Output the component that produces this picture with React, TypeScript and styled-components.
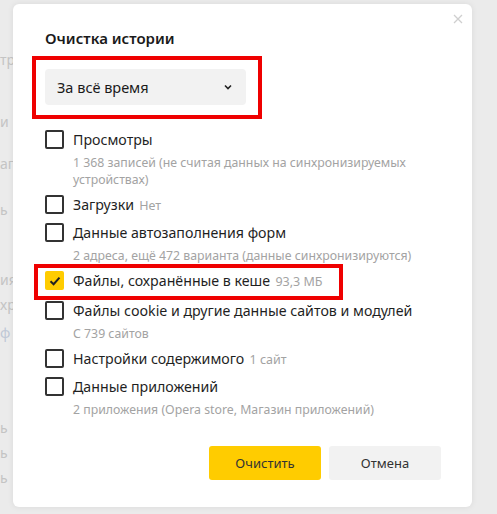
import React from 'react';
import styled, { createGlobalStyle } from 'styled-components';

const GlobalStyle = createGlobalStyle`
html, body {
  margin: 0;
  padding: 0;
  background: #ebebeb;
  font-family: 'Noto Sans', 'Open Sans', sans-serif;
}
`;

const Page = styled.div`
position: relative;
width: 497px;
height: 514px;
overflow: hidden;
background: #ebebeb;
`;

const BackdropText = styled.div`
display: flex;
flex-direction: column;
padding-top: 50px;
font-size: 14px;
`;

const BackdropLine = styled.div<{ $h: number; $blue?: boolean }>`
height: ${p => p.$h}px;
line-height: 20px;
white-space: nowrap;
color: ${p => (p.$blue ? '#bfc8d6' : '#c4c4c4')};
`;

const Modal = styled.div`
position: absolute;
top: 4px;
left: 13px;
width: 459px;
height: 503px;
box-sizing: border-box;
background: #fff;
border-radius: 6px;
box-shadow: 0 0 6px rgba(0, 0, 0, 0.08);
padding: 24px 31px 27px 32px;
display: flex;
flex-direction: column;
`;

const Close = styled.button`
position: absolute;
top: 9px;
right: 8px;
width: 12px;
height: 12px;
border: none;
background: none;
padding: 0;
cursor: pointer;
`;

const Title = styled.h2`
margin: 0;
font-size: 15px;
line-height: 21px;
font-weight: 600;
color: #1a1a1a;
`;

const SelectWrap = styled.div`
position: relative;
margin-top: 20px;
margin-bottom: 25px;
`;

const Highlight = styled.div<{ $top: number; $left: number; $w: number; $h: number }>`
position: absolute;
top: ${p => p.$top}px;
left: ${p => p.$left}px;
width: ${p => p.$w}px;
height: ${p => p.$h}px;
box-sizing: border-box;
border: 4px solid #ef0000;
pointer-events: none;
`;

const Select = styled.div`
width: 201px;
height: 36px;
box-sizing: border-box;
background: #f2f2f2;
border-radius: 4px;
padding: 0 14px 0 12px;
display: flex;
align-items: center;
justify-content: space-between;
font-size: 14.5px;
color: #1a1a1a;
`;

const List = styled.div`
display: flex;
flex-direction: column;
`;

const Item = styled.div<{ $extra?: number }>`
position: relative;
display: grid;
grid-template-columns: 19px 1fr;
column-gap: 9px;
padding-bottom: ${p => 9 + (p.$extra || 0)}px;
`;

const Box = styled.span<{ $checked?: boolean }>`
width: 19px;
height: 19px;
box-sizing: border-box;
border-radius: 2px;
border: ${p => (p.$checked ? 'none' : '2px solid #333')};
background: ${p => (p.$checked ? '#ffcc00' : '#fff')};
display: flex;
align-items: center;
justify-content: center;
`;

const Label = styled.div`
font-size: 14.2px;
line-height: 19px;
height: 19px;
color: #1f1f1f;
white-space: nowrap;
`;

const Note = styled.span`
font-size: 12.5px;
line-height: 1;
color: #a3a3a3;
margin-left: 2px;
`;

const Sub = styled.div`
grid-column: 2;
margin-top: 5px;
margin-bottom: -2px;
font-size: 12.3px;
line-height: 17px;
color: #a3a3a3;
`;

const Footer = styled.div`
margin-top: auto;
display: flex;
justify-content: flex-end;
gap: 8px;
`;

const Button = styled.button<{ $primary?: boolean }>`
width: 112px;
height: 34px;
border: none;
border-radius: 3px;
background: ${p => (p.$primary ? '#ffcc00' : '#f2f2f2')};
color: #333;
font-family: inherit;
font-size: 13px;
cursor: pointer;
`;

type Option = {
  label: string;
  note?: string;
  sub?: string;
  checked?: boolean;
  marked?: boolean;
};

const options: Option[] = [
  { label: 'Просмотры', sub: '1 368 записей (не считая данных на синхронизируемых устройствах)' },
  { label: 'Загрузки', note: 'Нет' },
  { label: 'Данные автозаполнения форм', sub: '2 адреса, ещё 472 варианта (данные синхронизируются)' },
  { label: 'Файлы, сохранённые в кеше', note: '93,3 МБ', checked: true, marked: true },
  { label: 'Файлы cookie и другие данные сайтов и модулей', sub: 'С 739 сайтов' },
  { label: 'Настройки содержимого', note: '1 сайт' },
  { label: 'Данные приложений', sub: '2 приложения (Opera store, Магазин приложений)' },
];

const backdrop: [string, number, boolean?][] = [
  ['тр', 62],
  ['и', 42],
  ['аг', 46],
  ['ь', 70],
  ['ия', 25],
  ['хр', 28],
  ['ф', 95, true],
  ['ь', 25],
  ['ь', 25],
  ['ь', 25],
];

function Check() {
  return (
    <svg width="12" height="10" viewBox="0 0 12 10">
      <path d="M1.5 5.2 L4.6 8.2 L10.5 1.6" fill="none" stroke="#222" strokeWidth="2" />
    </svg>
  );
}

export default function App() {
  return (
    <Page>
      <GlobalStyle />
      <BackdropText>
        {backdrop.map(([t, h, blue], i) => (
          <BackdropLine key={'bg' + i} $h={h} $blue={blue}>{t}</BackdropLine>
        ))}
      </BackdropText>
      <Modal>
        <Close aria-label="Закрыть">
          <svg width="12" height="12" viewBox="0 0 12 12">
            <path d="M2 2 L10 10 M10 2 L2 10" stroke="#cfcfcf" strokeWidth="1.3" />
          </svg>
        </Close>
        <Title>Очистка истории</Title>
        <SelectWrap>
          <Select>
            <span>За всё время</span>
            <svg width="8" height="6" viewBox="0 0 8 6">
              <path d="M1 1.5 L4 4.5 L7 1.5" fill="none" stroke="#222" strokeWidth="1.6" />
            </svg>
          </Select>
          <Highlight $top={-13} $left={-13} $w={230} $h={63} />
        </SelectWrap>
        <List>
          {options.map((o, i) => (
            <Item key={'opt' + i} $extra={o.marked ? 2 : 0}>
              <Box $checked={o.checked}>{o.checked ? <Check /> : null}</Box>
              <Label>
                {o.label}
                {o.note ? <Note> {o.note}</Note> : null}
              </Label>
              {o.sub ? <Sub>{o.sub}</Sub> : null}
              {o.marked ? <Highlight $top={-7} $left={-11} $w={309} $h={36} /> : null}
            </Item>
          ))}
        </List>
        <Footer>
          <Button $primary>Очистить</Button>
          <Button>Отмена</Button>
        </Footer>
      </Modal>
    </Page>
  );
}
